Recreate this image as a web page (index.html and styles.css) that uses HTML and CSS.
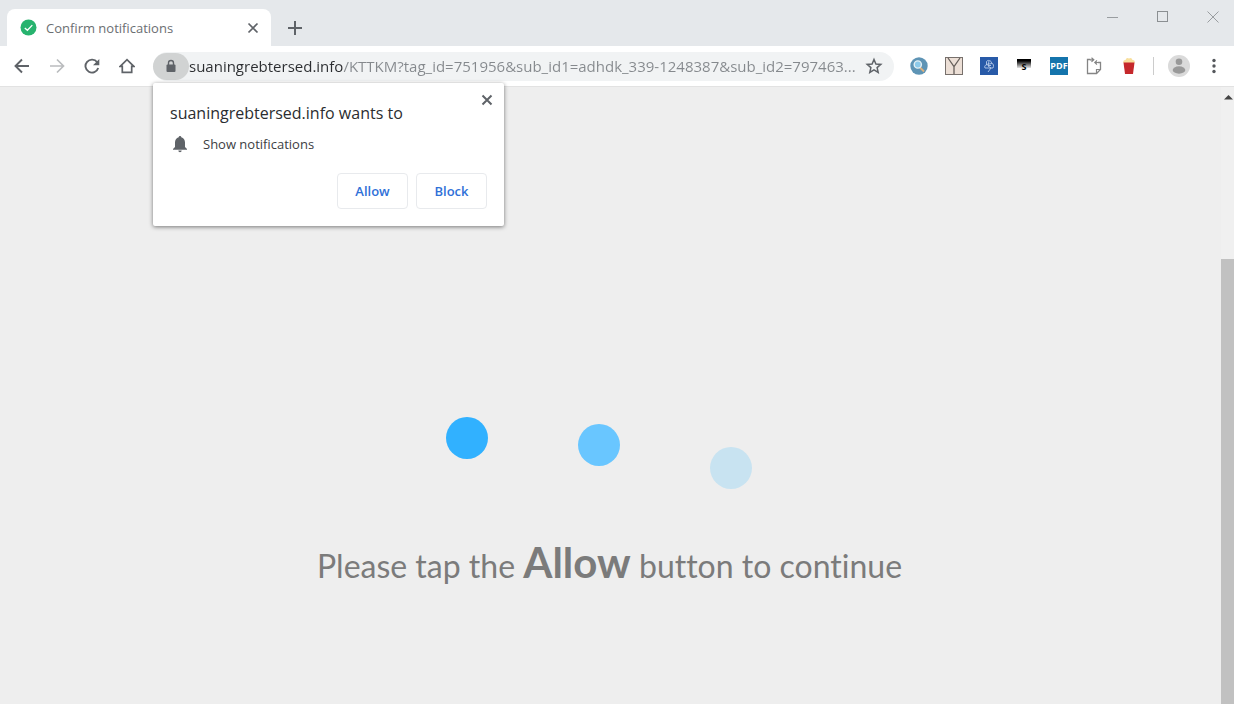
FILE: index.html
```html
<!DOCTYPE html>
<html lang="en">
<head>
<meta charset="UTF-8">
<meta name="viewport" content="width=device-width, initial-scale=1.0">
<title>Confirm notifications</title>
<link rel="stylesheet" href="styles.css">
</head>
<body>

<div class="titlebar">
  <div class="tab">
    <svg class="tab-icon" width="17" height="17" viewBox="0 0 17 17"><circle cx="8.500" cy="8.500" r="8" fill="#27b36e"/><path d="M4.800 8.900l2.600 2.400 4.900-5.200" fill="none" stroke="#fff" stroke-width="1.300"/></svg>
    <span class="tab-title">Confirm notifications</span>
    <button class="icon-btn" aria-label="Close tab"><svg width="12" height="12" viewBox="0 0 12 12"><path d="M1.500 1.500l9 9M10.500 1.500l-9 9" stroke="#5f6368" stroke-width="1.700"/></svg></button>
  </div>
  <button class="icon-btn new-tab" aria-label="New tab"><svg width="14" height="14" viewBox="0 0 14 14"><path d="M7 0v14M0 7h14" stroke="#5f6368" stroke-width="2"/></svg></button>
  <div class="window-controls">
    <button class="icon-btn" aria-label="Minimize"><svg width="12" height="12" viewBox="0 0 12 12"><path d="M0 6.500h11" stroke="#999da0"/></svg></button>
    <button class="icon-btn" aria-label="Maximize"><svg width="12" height="12" viewBox="0 0 12 12"><rect x=".5" y=".5" width="10" height="10" fill="none" stroke="#8b8f92"/></svg></button>
    <button class="icon-btn" aria-label="Close window"><svg width="12" height="12" viewBox="0 0 12 12"><path d="M.5.5l11 11M11.500.5l-11 11" stroke="#999da0"/></svg></button>
  </div>
</div>

<div class="toolbar">
  <div class="nav">
    <button class="icon-btn" aria-label="Back"><svg width="16" height="16" viewBox="0 0 16 16"><path d="M15 8H2M8 1.500L1.500 8 8 14.500" fill="none" stroke="#5f6368" stroke-width="1.900"/></svg></button>
    <button class="icon-btn" aria-label="Forward"><svg width="16" height="16" viewBox="0 0 16 16"><path d="M1 8h13M8 1.500L14.500 8 8 14.500" fill="none" stroke="#babcbe" stroke-width="1.700"/></svg></button>
    <button class="icon-btn" aria-label="Reload"><svg width="16" height="16" viewBox="0 0 16 16"><path d="M13.200 4.200A6.500 6.500 0 1 0 14.200 10" fill="none" stroke="#5f6368" stroke-width="1.900"/><path d="M15.300 1v6.300H9z" fill="#5f6368"/></svg></button>
    <button class="icon-btn" aria-label="Home"><svg width="16" height="16" viewBox="0 0 16 16"><path d="M1.200 8.300L8 1.700l6.800 6.600H12.700v6H3.300v-6z" fill="none" stroke="#5f6368" stroke-width="1.700"/></svg></button>
  </div>
  <div class="omnibox">
    <button class="lock" aria-label="View site information"><svg width="12" height="14" viewBox="0 0 12 14"><path d="M3.500 6V4a2.500 2.500 0 0 1 5 0v2" fill="none" stroke="#5f6368" stroke-width="1.400"/><rect x="1.500" y="5.500" width="9" height="7.500" rx="1" fill="#5f6368"/></svg></button>
    <input class="url" type="text" aria-label="Address" value="suaningrebtersed.info/KTTKM?tag_id=751956&amp;sub_id1=adhdk_339-1248387&amp;sub_id2=797463...">
    <button class="icon-btn" aria-label="Bookmark this page"><svg width="18" height="18" viewBox="0 0 18 18"><path d="M9 2.500l1.900 4.500 4.900.4-3.700 3.200 1.100 4.800L9 12.900l-4.200 2.500 1.100-4.800-3.700-3.200 4.900-.4z" fill="none" stroke="#5f6368" stroke-width="1.500"/></svg></button>
  </div>
  <div class="extensions">
    <button class="icon-btn" aria-label="Search"><svg width="18" height="18" viewBox="0 0 18 18"><circle cx="9" cy="9" r="8.700" fill="#5e94b5"/><path d="M10 10.500l4 4" stroke="#e0b27c" stroke-width="1.800"/><circle cx="7.800" cy="7.500" r="3.600" fill="#8ccaea" stroke="#e4f0f5" stroke-width="1.400"/></svg></button>
    <button class="icon-btn" aria-label="Y extension"><svg width="18" height="18" viewBox="0 0 18 18"><rect x=".5" y=".5" width="17" height="17" fill="#ecdfd6" stroke="#77706c"/><path d="M3 1l6 8.500L15 1M9 9.500V17" fill="none" stroke="#665f5b" stroke-width="1.300"/></svg></button>
    <button class="icon-btn" aria-label="Sketch extension"><svg width="18" height="18" viewBox="0 0 18 18"><path d="M0 0h18v18H0z" fill="#285aa8"/><path d="M6.500 4.500c1.500-2 5-1 5 1.500 2 .5 2.500 3 1.500 5H5c-.8-1.500 0-3 1.500-3zM6 7.500l6-1M9 4l-1 5 3 2-3 4M8 8.500h3" fill="none" stroke="#b6cbea" stroke-width=".9"/></svg></button>
    <button class="icon-btn" aria-label="S extension"><svg width="18" height="18" viewBox="0 0 18 18"><defs><linearGradient id="fade" x2="0" y2="1"><stop offset=".2" stop-color="#000"/><stop offset="1" stop-color="#e4e4e4"/></linearGradient></defs><path d="M2 2h14v9H2z" fill="url(#fade)"/><text x="9" y="13" class="s-mark">S</text></svg></button>
    <button class="pdf" aria-label="PDF viewer">PDF</button>
    <button class="icon-btn" aria-label="Copy"><svg width="18" height="18" viewBox="0 0 18 18"><path d="M5.500 2.500h-3v14h9l4-4v-7h-2.500" fill="none" stroke="#858585" stroke-width="1.300"/><path d="M11.500 16.500v-4h4M6.500.8L8.800 2.800 6.500 4.800M12 3.500L9.800 5.500 12 7.500M5 2.800h3.500M10 5.500h4" fill="none" stroke="#858585" stroke-width="1.200"/></svg></button>
    <button class="icon-btn" aria-label="Popcorn"><svg width="18" height="18" viewBox="0 0 18 18"><path d="M3.500 6a2 2 0 0 1 2-3 2.500 2.500 0 0 1 3.500-1.500A2.500 2.500 0 0 1 12.500 3a2 2 0 0 1 2 3z" fill="#f8df9d"/><path d="M3.500 5.500h11L13 17H5z" fill="#c5282b"/></svg></button>
  </div>
  <div class="divider"></div>
  <button class="icon-btn" aria-label="Profile"><svg width="22" height="22" viewBox="0 0 22 22"><circle cx="11" cy="11" r="11" fill="#dadada"/><circle cx="11" cy="6.800" r="3.300" fill="#999"/><ellipse cx="11" cy="15" rx="6.300" ry="3.700" fill="#999"/></svg></button>
  <button class="icon-btn menu" aria-label="Menu"><svg width="4" height="16" viewBox="0 0 4 16" fill="#55585c"><circle cx="2" cy="2.500" r="1.700"/><circle cx="2" cy="8" r="1.700"/><circle cx="2" cy="13.500" r="1.700"/></svg></button>
</div>

<div class="viewport">
  <main class="page">
    <svg class="loader" width="330" height="74" viewBox="0 0 330 74">
      <circle cx="22" cy="22" r="21" fill="#31b1ff"/>
      <circle cx="154" cy="29" r="21" fill="#69c6ff"/>
      <circle cx="286" cy="52" r="21" fill="#c8e3f1"/>
    </svg>
    <p class="message">Please tap the <strong>Allow</strong> button to continue</p>
  </main>
  <div class="scrollbar">
    <svg width="10" height="6" viewBox="0 0 10 6"><path d="M0 5.500l4.500-4.500L9 5.500z" fill="#444"/></svg>
    <div class="thumb"></div>
  </div>

  <div class="popup" role="dialog" aria-labelledby="popupTitle">
    <button class="icon-btn popup-close" aria-label="Close"><svg width="12" height="12" viewBox="0 0 12 12"><path d="M1.500 1.500l9 9M10.500 1.500l-9 9" stroke="#5f6368" stroke-width="2"/></svg></button>
    <h2 id="popupTitle">suaningrebtersed.info wants to</h2>
    <div class="permission">
      <svg width="16" height="18" viewBox="0 0 16 18"><path d="M8 1a1.300 1.300 0 0 1 1.300 1.300c2.500.7 3.700 2.700 3.700 5.200V12l2 2v.8H1V14l2-2V7.500C3 5 4.200 3 6.700 2.300A1.300 1.300 0 0 1 8 1zM6.300 15.500h3.400a1.700 1.700 0 0 1-3.400 0z" fill="#5f6368"/></svg>
      <span>Show notifications</span>
    </div>
    <div class="actions">
      <button>Allow</button>
      <button>Block</button>
    </div>
  </div>
</div>

</body>
</html>
```
FILE: styles.css
```css
* {
  box-sizing: border-box;
}

body {
  margin: 0;
  min-height: 100vh;
  display: flex;
  flex-direction: column;
  font-family: "Open Sans", "Noto Sans", sans-serif;
  background-color: #fff;
}

button {
  padding: 0;
  border: none;
  background: none;
  font-family: inherit;
  cursor: pointer;
}

svg {
  display: block;
}

.icon-btn {
  flex: none;
}

/* tab strip */
.titlebar {
  display: flex;
  height: 46px;
  padding: 9px 15px 0 7px;
  background-color: #e5e8eb;
}

.tab {
  display: flex;
  align-items: center;
  width: 264px;
  padding: 0 12px 0 13px;
  border-radius: 8px 8px 0 0;
  background-color: #fff;
}

.tab-title {
  flex: 1;
  margin-left: 9px;
  font-size: 13px;
  line-height: 18px;
  color: #6b6e72;
}

.new-tab {
  margin-left: 17px;
}

.window-controls {
  display: flex;
  align-items: flex-start;
  gap: 38px;
  margin-left: auto;
  padding-top: 2px;
}

/* toolbar */
.toolbar {
  display: flex;
  align-items: center;
  height: 41px;
  padding: 0 18px 0 14px;
  border-bottom: 1px solid #e2e2e2;
}

.nav {
  display: flex;
  gap: 19px;
  margin-right: 18px;
}

.omnibox {
  display: flex;
  flex: 1;
  align-items: center;
  min-width: 0;
  height: 29px;
  padding-right: 11px;
  border-radius: 15px;
  background-color: #f1f3f4;
}

.lock {
  display: flex;
  flex: none;
  align-items: center;
  justify-content: center;
  width: 36px;
  height: 27px;
  border-radius: 14px;
  background-color: #d1d3d3;
}

.url {
  flex: 1;
  min-width: 0;
  height: 27px;
  padding: 0;
  border: none;
  outline: none;
  font-family: inherit;
  font-size: 15px;
  /* host dark, the rest of the address grey */
  background: linear-gradient(90deg, #2b2d30 154px, #85898d 154px);
  -webkit-background-clip: text;
  background-clip: text;
  color: transparent;
}

.extensions {
  display: flex;
  align-items: center;
  gap: 17px;
  margin-left: 16px;
}

.s-mark {
  font-size: 9px;
  font-weight: bold;
  text-anchor: middle;
}

.pdf {
  width: 18px;
  height: 18px;
  background-color: #1474ac;
  color: #fff;
  font-size: 9px;
  line-height: 18px;
  font-weight: bold;
}

.divider {
  width: 1px;
  height: 18px;
  margin: 0 14px 0 15px;
  background-color: #ccc;
}

.menu {
  margin-left: 22px;
}

/* page area */
.viewport {
  position: relative;
  display: flex;
  flex: 1;
}

.page {
  display: flex;
  flex: 1;
  flex-direction: column;
  align-items: center;
  padding: 329px 18px 32px 16px;
  background-color: #eee;
}

.message {
  margin: 42px 0 0;
  font-family: "Lato", "Open Sans", sans-serif;
  font-size: 32px;
  line-height: 60px;
  font-variant-ligatures: none;
  color: #7b7b7b;
}

.message strong {
  font-size: 42px;
}

.scrollbar {
  display: flex;
  flex-direction: column;
  align-items: flex-end;
  width: 13px;
  padding-top: 7px;
  background-color: #f0f0f0;
}

.thumb {
  flex: 1;
  width: 100%;
  margin-top: 159px;
  background-color: #c1c1c1;
}

/* permission popup */
.popup {
  position: absolute;
  top: -4px;
  left: 153px;
  width: 351px;
  padding: 17px;
  border-radius: 2px;
  background-color: #fff;
  box-shadow: 0 1px 4px rgba(0, 0, 0, 0.5);
}

.popup-close {
  position: absolute;
  top: 11px;
  right: 11px;
}

.popup h2 {
  margin: 0;
  font-size: 16px;
  line-height: 26px;
  font-weight: normal;
  color: #2b2d30;
}

.permission {
  display: flex;
  align-items: center;
  gap: 15px;
  margin-top: 8px;
  padding-left: 2px;
  font-size: 13px;
  line-height: 20px;
  color: #3c4043;
}

.actions {
  display: flex;
  justify-content: flex-end;
  gap: 8px;
  margin-top: 19px;
}

.actions button {
  width: 71px;
  height: 36px;
  border: 1px solid #e8eaed;
  border-radius: 4px;
  background-color: #fff;
  color: #2f70d8;
  font-size: 13px;
  font-weight: 600;
}
```
